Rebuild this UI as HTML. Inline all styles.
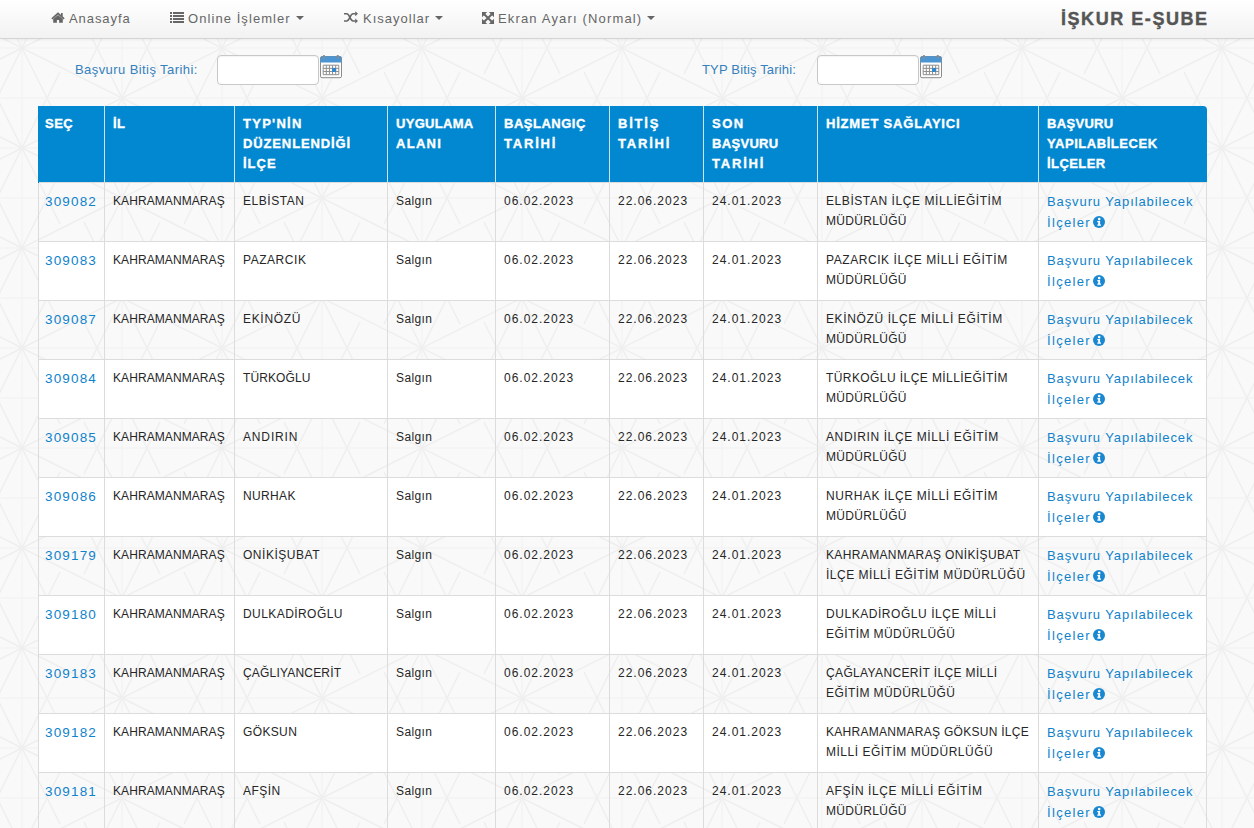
<!DOCTYPE html>
<html><head><meta charset="utf-8">
<style>
html,body{margin:0;padding:0;width:1254px;height:828px;overflow:hidden}
body{background:#f9f9f9;font-family:"Liberation Sans",sans-serif;position:relative}
#bg{position:absolute;left:0;top:0;width:1254px;height:828px}
.nav{position:absolute;left:0;top:0;width:1254px;height:38px;background:linear-gradient(#ffffff,#f2f2f2);border-bottom:1px solid #d4d4d4;box-shadow:0 1px 3px rgba(0,0,0,.06)}
.ni{position:absolute;top:0;height:38px;line-height:38px;font-size:13px;color:#666;white-space:nowrap}
.ni svg{position:absolute}
.caret{position:absolute;top:16px;width:0;height:0;border-left:4px solid transparent;border-right:4px solid transparent;border-top:4px solid #666}
.brand{-webkit-text-stroke:0.4px #555;position:absolute;top:0;left:1061px;height:38px;line-height:38px;font-size:18px;font-weight:bold;color:#555;letter-spacing:1.55px}
.lbl{position:absolute;font-size:13px;color:#3580bd;white-space:nowrap}
.inp{position:absolute;top:55px;width:100px;height:28px;border:1px solid #c8c8c8;border-radius:4px;background:#fff;box-shadow:inset 0 1px 1px rgba(0,0,0,.05)}
.cal{position:absolute;top:55px}
table{position:absolute;left:38px;top:106px;border-collapse:collapse;table-layout:fixed;width:1169px}
th{-webkit-text-stroke:0.35px #fff;background:#0288d1;color:#fff;font-weight:bold;font-size:13px;line-height:20px;text-align:left;vertical-align:top;padding:8px 8px 0 8px;height:68px;border-left:1px solid #cfe3ee}
th:first-child span{position:relative;left:-2px}
th:first-child{border-left:1px solid #0288d1}
th:last-child{border-top-right-radius:4px}
td{white-space:nowrap;font-size:12px;color:#262626;line-height:20px;vertical-align:top;padding:8px 8px 0 8px;height:50px;border:1px solid #dcdcdc}
tr.w td{background:#fff}
td a,.lnk{color:#0f82cc;text-decoration:none;font-size:13px}
.lnk2{line-height:21px}
.sid{letter-spacing:1.15px;font-size:13.5px;position:relative;left:-2px;top:1px}
.il{letter-spacing:0.08px}
.ic{letter-spacing:0.57px}
.sg{letter-spacing:0.4px}
.dt{letter-spacing:1px}
.hz{letter-spacing:0.58px}
.lk a{letter-spacing:0.9px}
.l1{position:relative;top:1px}
.l2{letter-spacing:1.33px;position:relative;top:2px}
.info{position:absolute;margin-left:2px;margin-top:5px}
</style></head><body>
<svg id="bg" width="1254" height="828"><path d="M22 38V828M122 38V828M222 38V828M322 38V828M422 38V828M522 38V828M622 38V828M722 38V828M822 38V828M922 38V828M1022 38V828M1122 38V828M1222 38V828M0 48H1254M0 98H1254M0 148H1254M0 198H1254M0 248H1254M0 298H1254M0 348H1254M0 398H1254M0 448H1254M0 498H1254M0 548H1254M0 598H1254M0 648H1254M0 698H1254M0 748H1254M0 798H1254" stroke="#f1f1f1" stroke-width="1" fill="none"/><path d="M0 -963.0L1254 -336.0M0 -941.0L1254 -1568.0M0 -863.0L1254 -236.0M0 -841.0L1254 -1468.0M0 -763.0L1254 -136.0M0 -741.0L1254 -1368.0M0 -663.0L1254 -36.0M0 -641.0L1254 -1268.0M0 -563.0L1254 64.0M0 -541.0L1254 -1168.0M0 -463.0L1254 164.0M0 -441.0L1254 -1068.0M0 -363.0L1254 264.0M0 -341.0L1254 -968.0M0 -263.0L1254 364.0M0 -241.0L1254 -868.0M0 -163.0L1254 464.0M0 -141.0L1254 -768.0M0 -63.0L1254 564.0M0 -41.0L1254 -668.0M0 37.0L1254 664.0M0 59.0L1254 -568.0M0 137.0L1254 764.0M0 159.0L1254 -468.0M0 237.0L1254 864.0M0 259.0L1254 -368.0M0 337.0L1254 964.0M0 359.0L1254 -268.0M0 437.0L1254 1064.0M0 459.0L1254 -168.0M0 537.0L1254 1164.0M0 559.0L1254 -68.0M0 637.0L1254 1264.0M0 659.0L1254 32.0M0 737.0L1254 1364.0M0 759.0L1254 132.0M0 837.0L1254 1464.0M0 859.0L1254 232.0M0 937.0L1254 1564.0M0 959.0L1254 332.0M0 1037.0L1254 1664.0M0 1059.0L1254 432.0M0 1137.0L1254 1764.0M0 1159.0L1254 532.0M0 1237.0L1254 1864.0M0 1259.0L1254 632.0M0 1337.0L1254 1964.0M0 1359.0L1254 732.0M0 1437.0L1254 2064.0M0 1459.0L1254 832.0M0 1537.0L1254 2164.0M0 1559.0L1254 932.0M0 1637.0L1254 2264.0M0 1659.0L1254 1032.0M0 1737.0L1254 2364.0M0 1759.0L1254 1132.0M0 1837.0L1254 2464.0M0 1859.0L1254 1232.0M0 1937.0L1254 2564.0M0 1959.0L1254 1332.0" stroke="#eeeeee" stroke-width="1.5" fill="none"/><path d="M-216.0 -128.0L-140.0 24.0M-216.0 24.0L-140.0 -128.0M-216.0 -28.0L-140.0 124.0M-216.0 124.0L-140.0 -28.0M-216.0 72.0L-140.0 224.0M-216.0 224.0L-140.0 72.0M-216.0 172.0L-140.0 324.0M-216.0 324.0L-140.0 172.0M-216.0 272.0L-140.0 424.0M-216.0 424.0L-140.0 272.0M-216.0 372.0L-140.0 524.0M-216.0 524.0L-140.0 372.0M-216.0 472.0L-140.0 624.0M-216.0 624.0L-140.0 472.0M-216.0 572.0L-140.0 724.0M-216.0 724.0L-140.0 572.0M-216.0 672.0L-140.0 824.0M-216.0 824.0L-140.0 672.0M-216.0 772.0L-140.0 924.0M-216.0 924.0L-140.0 772.0M-116.0 -78.0L-40.0 74.0M-116.0 74.0L-40.0 -78.0M-116.0 22.0L-40.0 174.0M-116.0 174.0L-40.0 22.0M-116.0 122.0L-40.0 274.0M-116.0 274.0L-40.0 122.0M-116.0 222.0L-40.0 374.0M-116.0 374.0L-40.0 222.0M-116.0 322.0L-40.0 474.0M-116.0 474.0L-40.0 322.0M-116.0 422.0L-40.0 574.0M-116.0 574.0L-40.0 422.0M-116.0 522.0L-40.0 674.0M-116.0 674.0L-40.0 522.0M-116.0 622.0L-40.0 774.0M-116.0 774.0L-40.0 622.0M-116.0 722.0L-40.0 874.0M-116.0 874.0L-40.0 722.0M-116.0 822.0L-40.0 974.0M-116.0 974.0L-40.0 822.0M-16.0 -128.0L60.0 24.0M-16.0 24.0L60.0 -128.0M-16.0 -28.0L60.0 124.0M-16.0 124.0L60.0 -28.0M-16.0 72.0L60.0 224.0M-16.0 224.0L60.0 72.0M-16.0 172.0L60.0 324.0M-16.0 324.0L60.0 172.0M-16.0 272.0L60.0 424.0M-16.0 424.0L60.0 272.0M-16.0 372.0L60.0 524.0M-16.0 524.0L60.0 372.0M-16.0 472.0L60.0 624.0M-16.0 624.0L60.0 472.0M-16.0 572.0L60.0 724.0M-16.0 724.0L60.0 572.0M-16.0 672.0L60.0 824.0M-16.0 824.0L60.0 672.0M-16.0 772.0L60.0 924.0M-16.0 924.0L60.0 772.0M84.0 -78.0L160.0 74.0M84.0 74.0L160.0 -78.0M84.0 22.0L160.0 174.0M84.0 174.0L160.0 22.0M84.0 122.0L160.0 274.0M84.0 274.0L160.0 122.0M84.0 222.0L160.0 374.0M84.0 374.0L160.0 222.0M84.0 322.0L160.0 474.0M84.0 474.0L160.0 322.0M84.0 422.0L160.0 574.0M84.0 574.0L160.0 422.0M84.0 522.0L160.0 674.0M84.0 674.0L160.0 522.0M84.0 622.0L160.0 774.0M84.0 774.0L160.0 622.0M84.0 722.0L160.0 874.0M84.0 874.0L160.0 722.0M84.0 822.0L160.0 974.0M84.0 974.0L160.0 822.0M184.0 -128.0L260.0 24.0M184.0 24.0L260.0 -128.0M184.0 -28.0L260.0 124.0M184.0 124.0L260.0 -28.0M184.0 72.0L260.0 224.0M184.0 224.0L260.0 72.0M184.0 172.0L260.0 324.0M184.0 324.0L260.0 172.0M184.0 272.0L260.0 424.0M184.0 424.0L260.0 272.0M184.0 372.0L260.0 524.0M184.0 524.0L260.0 372.0M184.0 472.0L260.0 624.0M184.0 624.0L260.0 472.0M184.0 572.0L260.0 724.0M184.0 724.0L260.0 572.0M184.0 672.0L260.0 824.0M184.0 824.0L260.0 672.0M184.0 772.0L260.0 924.0M184.0 924.0L260.0 772.0M284.0 -78.0L360.0 74.0M284.0 74.0L360.0 -78.0M284.0 22.0L360.0 174.0M284.0 174.0L360.0 22.0M284.0 122.0L360.0 274.0M284.0 274.0L360.0 122.0M284.0 222.0L360.0 374.0M284.0 374.0L360.0 222.0M284.0 322.0L360.0 474.0M284.0 474.0L360.0 322.0M284.0 422.0L360.0 574.0M284.0 574.0L360.0 422.0M284.0 522.0L360.0 674.0M284.0 674.0L360.0 522.0M284.0 622.0L360.0 774.0M284.0 774.0L360.0 622.0M284.0 722.0L360.0 874.0M284.0 874.0L360.0 722.0M284.0 822.0L360.0 974.0M284.0 974.0L360.0 822.0M384.0 -128.0L460.0 24.0M384.0 24.0L460.0 -128.0M384.0 -28.0L460.0 124.0M384.0 124.0L460.0 -28.0M384.0 72.0L460.0 224.0M384.0 224.0L460.0 72.0M384.0 172.0L460.0 324.0M384.0 324.0L460.0 172.0M384.0 272.0L460.0 424.0M384.0 424.0L460.0 272.0M384.0 372.0L460.0 524.0M384.0 524.0L460.0 372.0M384.0 472.0L460.0 624.0M384.0 624.0L460.0 472.0M384.0 572.0L460.0 724.0M384.0 724.0L460.0 572.0M384.0 672.0L460.0 824.0M384.0 824.0L460.0 672.0M384.0 772.0L460.0 924.0M384.0 924.0L460.0 772.0M484.0 -78.0L560.0 74.0M484.0 74.0L560.0 -78.0M484.0 22.0L560.0 174.0M484.0 174.0L560.0 22.0M484.0 122.0L560.0 274.0M484.0 274.0L560.0 122.0M484.0 222.0L560.0 374.0M484.0 374.0L560.0 222.0M484.0 322.0L560.0 474.0M484.0 474.0L560.0 322.0M484.0 422.0L560.0 574.0M484.0 574.0L560.0 422.0M484.0 522.0L560.0 674.0M484.0 674.0L560.0 522.0M484.0 622.0L560.0 774.0M484.0 774.0L560.0 622.0M484.0 722.0L560.0 874.0M484.0 874.0L560.0 722.0M484.0 822.0L560.0 974.0M484.0 974.0L560.0 822.0M584.0 -128.0L660.0 24.0M584.0 24.0L660.0 -128.0M584.0 -28.0L660.0 124.0M584.0 124.0L660.0 -28.0M584.0 72.0L660.0 224.0M584.0 224.0L660.0 72.0M584.0 172.0L660.0 324.0M584.0 324.0L660.0 172.0M584.0 272.0L660.0 424.0M584.0 424.0L660.0 272.0M584.0 372.0L660.0 524.0M584.0 524.0L660.0 372.0M584.0 472.0L660.0 624.0M584.0 624.0L660.0 472.0M584.0 572.0L660.0 724.0M584.0 724.0L660.0 572.0M584.0 672.0L660.0 824.0M584.0 824.0L660.0 672.0M584.0 772.0L660.0 924.0M584.0 924.0L660.0 772.0M684.0 -78.0L760.0 74.0M684.0 74.0L760.0 -78.0M684.0 22.0L760.0 174.0M684.0 174.0L760.0 22.0M684.0 122.0L760.0 274.0M684.0 274.0L760.0 122.0M684.0 222.0L760.0 374.0M684.0 374.0L760.0 222.0M684.0 322.0L760.0 474.0M684.0 474.0L760.0 322.0M684.0 422.0L760.0 574.0M684.0 574.0L760.0 422.0M684.0 522.0L760.0 674.0M684.0 674.0L760.0 522.0M684.0 622.0L760.0 774.0M684.0 774.0L760.0 622.0M684.0 722.0L760.0 874.0M684.0 874.0L760.0 722.0M684.0 822.0L760.0 974.0M684.0 974.0L760.0 822.0M784.0 -128.0L860.0 24.0M784.0 24.0L860.0 -128.0M784.0 -28.0L860.0 124.0M784.0 124.0L860.0 -28.0M784.0 72.0L860.0 224.0M784.0 224.0L860.0 72.0M784.0 172.0L860.0 324.0M784.0 324.0L860.0 172.0M784.0 272.0L860.0 424.0M784.0 424.0L860.0 272.0M784.0 372.0L860.0 524.0M784.0 524.0L860.0 372.0M784.0 472.0L860.0 624.0M784.0 624.0L860.0 472.0M784.0 572.0L860.0 724.0M784.0 724.0L860.0 572.0M784.0 672.0L860.0 824.0M784.0 824.0L860.0 672.0M784.0 772.0L860.0 924.0M784.0 924.0L860.0 772.0M884.0 -78.0L960.0 74.0M884.0 74.0L960.0 -78.0M884.0 22.0L960.0 174.0M884.0 174.0L960.0 22.0M884.0 122.0L960.0 274.0M884.0 274.0L960.0 122.0M884.0 222.0L960.0 374.0M884.0 374.0L960.0 222.0M884.0 322.0L960.0 474.0M884.0 474.0L960.0 322.0M884.0 422.0L960.0 574.0M884.0 574.0L960.0 422.0M884.0 522.0L960.0 674.0M884.0 674.0L960.0 522.0M884.0 622.0L960.0 774.0M884.0 774.0L960.0 622.0M884.0 722.0L960.0 874.0M884.0 874.0L960.0 722.0M884.0 822.0L960.0 974.0M884.0 974.0L960.0 822.0M984.0 -128.0L1060.0 24.0M984.0 24.0L1060.0 -128.0M984.0 -28.0L1060.0 124.0M984.0 124.0L1060.0 -28.0M984.0 72.0L1060.0 224.0M984.0 224.0L1060.0 72.0M984.0 172.0L1060.0 324.0M984.0 324.0L1060.0 172.0M984.0 272.0L1060.0 424.0M984.0 424.0L1060.0 272.0M984.0 372.0L1060.0 524.0M984.0 524.0L1060.0 372.0M984.0 472.0L1060.0 624.0M984.0 624.0L1060.0 472.0M984.0 572.0L1060.0 724.0M984.0 724.0L1060.0 572.0M984.0 672.0L1060.0 824.0M984.0 824.0L1060.0 672.0M984.0 772.0L1060.0 924.0M984.0 924.0L1060.0 772.0M1084.0 -78.0L1160.0 74.0M1084.0 74.0L1160.0 -78.0M1084.0 22.0L1160.0 174.0M1084.0 174.0L1160.0 22.0M1084.0 122.0L1160.0 274.0M1084.0 274.0L1160.0 122.0M1084.0 222.0L1160.0 374.0M1084.0 374.0L1160.0 222.0M1084.0 322.0L1160.0 474.0M1084.0 474.0L1160.0 322.0M1084.0 422.0L1160.0 574.0M1084.0 574.0L1160.0 422.0M1084.0 522.0L1160.0 674.0M1084.0 674.0L1160.0 522.0M1084.0 622.0L1160.0 774.0M1084.0 774.0L1160.0 622.0M1084.0 722.0L1160.0 874.0M1084.0 874.0L1160.0 722.0M1084.0 822.0L1160.0 974.0M1084.0 974.0L1160.0 822.0M1184.0 -128.0L1260.0 24.0M1184.0 24.0L1260.0 -128.0M1184.0 -28.0L1260.0 124.0M1184.0 124.0L1260.0 -28.0M1184.0 72.0L1260.0 224.0M1184.0 224.0L1260.0 72.0M1184.0 172.0L1260.0 324.0M1184.0 324.0L1260.0 172.0M1184.0 272.0L1260.0 424.0M1184.0 424.0L1260.0 272.0M1184.0 372.0L1260.0 524.0M1184.0 524.0L1260.0 372.0M1184.0 472.0L1260.0 624.0M1184.0 624.0L1260.0 472.0M1184.0 572.0L1260.0 724.0M1184.0 724.0L1260.0 572.0M1184.0 672.0L1260.0 824.0M1184.0 824.0L1260.0 672.0M1184.0 772.0L1260.0 924.0M1184.0 924.0L1260.0 772.0M1284.0 -78.0L1360.0 74.0M1284.0 74.0L1360.0 -78.0M1284.0 22.0L1360.0 174.0M1284.0 174.0L1360.0 22.0M1284.0 122.0L1360.0 274.0M1284.0 274.0L1360.0 122.0M1284.0 222.0L1360.0 374.0M1284.0 374.0L1360.0 222.0M1284.0 322.0L1360.0 474.0M1284.0 474.0L1360.0 322.0M1284.0 422.0L1360.0 574.0M1284.0 574.0L1360.0 422.0M1284.0 522.0L1360.0 674.0M1284.0 674.0L1360.0 522.0M1284.0 622.0L1360.0 774.0M1284.0 774.0L1360.0 622.0M1284.0 722.0L1360.0 874.0M1284.0 874.0L1360.0 722.0M1284.0 822.0L1360.0 974.0M1284.0 974.0L1360.0 822.0M1384.0 -128.0L1460.0 24.0M1384.0 24.0L1460.0 -128.0M1384.0 -28.0L1460.0 124.0M1384.0 124.0L1460.0 -28.0M1384.0 72.0L1460.0 224.0M1384.0 224.0L1460.0 72.0M1384.0 172.0L1460.0 324.0M1384.0 324.0L1460.0 172.0M1384.0 272.0L1460.0 424.0M1384.0 424.0L1460.0 272.0M1384.0 372.0L1460.0 524.0M1384.0 524.0L1460.0 372.0M1384.0 472.0L1460.0 624.0M1384.0 624.0L1460.0 472.0M1384.0 572.0L1460.0 724.0M1384.0 724.0L1460.0 572.0M1384.0 672.0L1460.0 824.0M1384.0 824.0L1460.0 672.0M1384.0 772.0L1460.0 924.0M1384.0 924.0L1460.0 772.0" stroke="#efefef" stroke-width="1.5" fill="none"/></svg>
<div class="nav">
  <div class="ni" style="left:51px">
    <svg width="14" height="12" viewBox="0 0 14 12" style="left:0;top:12px"><path d="M0.9 6.9 L7 1.3 L13.1 6.9" fill="none" stroke="#666" stroke-width="1.7"/><rect x="10" y="1" width="1.7" height="3.6" fill="#666"/><path d="M2.2 10.8 V7.1 L7 2.9 L11.8 7.1 V10.8 H8.1 V8 H5.9 V10.8Z" fill="#666"/></svg>
    <span style="position:absolute;left:18px;letter-spacing:0.93px">Anasayfa</span>
  </div>
  <div class="ni" style="left:170px">
    <svg width="14" height="12" viewBox="0 0 14 12" style="left:0;top:12px"><g fill="#666"><rect x="0" y="0" width="2" height="2"/><rect x="3" y="0" width="11" height="2"/><rect x="0" y="3" width="2" height="2"/><rect x="3" y="3" width="11" height="2"/><rect x="0" y="6" width="2" height="2"/><rect x="3" y="6" width="11" height="2"/><rect x="0" y="9" width="2" height="2"/><rect x="3" y="9" width="11" height="2"/></g></svg>
    <span style="position:absolute;left:18px;letter-spacing:1.07px">Online İşlemler</span>
    <div class="caret" style="left:126px"></div>
  </div>
  <div class="ni" style="left:344px">
    <svg width="14" height="13" viewBox="0 0 14 13" style="left:0;top:11px"><g fill="none" stroke="#666" stroke-width="1.6"><path d="M0 2.8 H2.8 C5.6 2.8 6.2 10 9 10 H11.5"/><path d="M0 10 H2.8 C5.6 10 6.2 2.8 9 2.8 H11.5"/></g><path d="M11.2 0.2 L14 2.8 L11.2 5.3Z M11.2 7.4 L14 10 L11.2 12.6Z" fill="#666"/></svg>
    <span style="position:absolute;left:19px;letter-spacing:1px">Kısayollar</span>
    <div class="caret" style="left:91px"></div>
  </div>
  <div class="ni" style="left:481px">
    <svg width="13" height="13" viewBox="0 0 13 13" style="left:1px;top:12px"><g fill="#666"><path d="M0 0 H5.2 L0 5.2Z"/><path d="M12 0 V5.2 L6.8 0Z"/><path d="M0 12 V6.8 L5.2 12Z"/><path d="M12 12 H6.8 L12 6.8Z"/></g><path d="M1.5 1.5 L10.5 10.5 M10.5 1.5 L1.5 10.5" stroke="#666" stroke-width="2"/></svg>
    <span style="position:absolute;left:17px;letter-spacing:1.16px">Ekran Ayarı (Normal)</span>
    <div class="caret" style="left:166px"></div>
  </div>
  <div class="brand">İŞKUR E-ŞUBE</div>
</div>

<div class="lbl" style="left:75px;top:62px;letter-spacing:0.42px">Başvuru Bitiş Tarihi:</div>
<div class="inp" style="left:217px"></div>
<svg class="cal" style="left:320px" width="22" height="24" viewBox="0 0 22 24"><rect x="0.5" y="1.5" width="21" height="21.2" rx="1.5" fill="#fff" stroke="#8a8a8a"/><path d="M0.5 7.6 V3 Q0.5 1.2 2.3 1.2 H19.7 Q21.5 1.2 21.5 3 V7.6Z" fill="#4a95d2"/><g fill="#8a8a8a"><rect x="3" y="0" width="2" height="3.6" rx="0.6"/><rect x="16.8" y="0" width="2" height="3.6" rx="0.6"/></g><g stroke="#8f8f8f" stroke-width="1"><line x1="3.20" y1="10.2" x2="3.20" y2="19.7"/><line x1="6.32" y1="10.2" x2="6.32" y2="19.7"/><line x1="9.44" y1="10.2" x2="9.44" y2="19.7"/><line x1="12.56" y1="10.2" x2="12.56" y2="19.7"/><line x1="15.68" y1="10.2" x2="15.68" y2="19.7"/><line x1="18.80" y1="10.2" x2="18.80" y2="19.7"/><line x1="3.2" y1="10.20" x2="18.8" y2="10.20"/><line x1="3.2" y1="13.37" x2="18.8" y2="13.37"/><line x1="3.2" y1="16.53" x2="18.8" y2="16.53"/><line x1="3.2" y1="19.70" x2="18.8" y2="19.70"/></g><rect x="12.16" y="12.97" width="3.92" height="3.97" fill="#2f86cf"/></svg>
<div class="lbl" style="left:702px;top:62px;letter-spacing:0.16px">TYP Bitiş Tarihi:</div>
<div class="inp" style="left:817px"></div>
<svg class="cal" style="left:920px" width="22" height="24" viewBox="0 0 22 24"><rect x="0.5" y="1.5" width="21" height="21.2" rx="1.5" fill="#fff" stroke="#8a8a8a"/><path d="M0.5 7.6 V3 Q0.5 1.2 2.3 1.2 H19.7 Q21.5 1.2 21.5 3 V7.6Z" fill="#4a95d2"/><g fill="#8a8a8a"><rect x="3" y="0" width="2" height="3.6" rx="0.6"/><rect x="16.8" y="0" width="2" height="3.6" rx="0.6"/></g><g stroke="#8f8f8f" stroke-width="1"><line x1="3.20" y1="10.2" x2="3.20" y2="19.7"/><line x1="6.32" y1="10.2" x2="6.32" y2="19.7"/><line x1="9.44" y1="10.2" x2="9.44" y2="19.7"/><line x1="12.56" y1="10.2" x2="12.56" y2="19.7"/><line x1="15.68" y1="10.2" x2="15.68" y2="19.7"/><line x1="18.80" y1="10.2" x2="18.80" y2="19.7"/><line x1="3.2" y1="10.20" x2="18.8" y2="10.20"/><line x1="3.2" y1="13.37" x2="18.8" y2="13.37"/><line x1="3.2" y1="16.53" x2="18.8" y2="16.53"/><line x1="3.2" y1="19.70" x2="18.8" y2="19.70"/></g><rect x="12.16" y="12.97" width="3.92" height="3.97" fill="#2f86cf"/></svg>

<table>
<colgroup><col style="width:66px"><col style="width:130px"><col style="width:153px"><col style="width:108px"><col style="width:114px"><col style="width:94px"><col style="width:114px"><col style="width:221px"><col style="width:168px"></colgroup>
<thead><tr><th><span style="letter-spacing:0.5px">SEÇ</span></th><th><span style="letter-spacing:0.5px">İL</span></th><th><span style="letter-spacing:1.27px">TYP'NİN</span><br><span style="letter-spacing:0.87px">DÜZENLENDİĞİ</span><br><span style="letter-spacing:1.0px">İLÇE</span></th><th><span style="letter-spacing:0.3px">UYGULAMA</span><br><span style="letter-spacing:1.3px">ALANI</span></th><th><span style="letter-spacing:0.5px">BAŞLANGIÇ</span><br><span style="letter-spacing:1.8px">TARİHİ</span></th><th><span style="letter-spacing:1.8px">BİTİŞ</span><br><span style="letter-spacing:1.8px">TARİHİ</span></th><th><span style="letter-spacing:1.5px">SON</span><br><span style="letter-spacing:0.32px">BAŞVURU</span><br><span style="letter-spacing:1.8px">TARİHİ</span></th><th><span style="letter-spacing:0.8px">HİZMET SAĞLAYICI</span></th><th><span style="letter-spacing:0.32px">BAŞVURU</span><br><span style="letter-spacing:0.54px">YAPILABİLECEK</span><br><span style="letter-spacing:0.43px">İLÇELER</span></th></tr></thead>
<tbody id="tb">
<tr><td><a class="sid">309082</a></td><td class="il">KAHRAMANMARAŞ</td><td class="ic"><span style="letter-spacing:0.53px">ELBİSTAN</span></td><td class="sg">Salgın</td><td class="dt">06.02.2023</td><td class="dt">22.06.2023</td><td class="dt">24.01.2023</td><td class="hz"><span style="letter-spacing:0.57px">ELBİSTAN İLÇE MİLLİEĞİTİM</span><br><span style="letter-spacing:0.31px">MÜDÜRLÜĞÜ</span></td><td class="lk"><a><span class="l1">Başvuru Yapılabilecek</span><br><span class="l2">İlçeler</span><svg class="info" width="12" height="12" viewBox="0 0 12 12"><circle cx="6" cy="6" r="6" fill="#1a88d0"/><circle cx="6.2" cy="3.1" r="1.3" fill="#fff"/><path d="M4.3 5 H7.1 V8.6 H8 V9.8 H4.3 V8.6 H5.2 V6.2 H4.3Z" fill="#fff"/></svg></a></td></tr>
<tr class="w"><td><a class="sid">309083</a></td><td class="il">KAHRAMANMARAŞ</td><td class="ic"><span style="letter-spacing:0.54px">PAZARCIK</span></td><td class="sg">Salgın</td><td class="dt">06.02.2023</td><td class="dt">22.06.2023</td><td class="dt">24.01.2023</td><td class="hz"><span style="letter-spacing:0.56px">PAZARCIK İLÇE MİLLİ EĞİTİM</span><br><span style="letter-spacing:0.31px">MÜDÜRLÜĞÜ</span></td><td class="lk"><a><span class="l1">Başvuru Yapılabilecek</span><br><span class="l2">İlçeler</span><svg class="info" width="12" height="12" viewBox="0 0 12 12"><circle cx="6" cy="6" r="6" fill="#1a88d0"/><circle cx="6.2" cy="3.1" r="1.3" fill="#fff"/><path d="M4.3 5 H7.1 V8.6 H8 V9.8 H4.3 V8.6 H5.2 V6.2 H4.3Z" fill="#fff"/></svg></a></td></tr>
<tr><td><a class="sid">309087</a></td><td class="il">KAHRAMANMARAŞ</td><td class="ic"><span style="letter-spacing:0.68px">EKİNÖZÜ</span></td><td class="sg">Salgın</td><td class="dt">06.02.2023</td><td class="dt">22.06.2023</td><td class="dt">24.01.2023</td><td class="hz"><span style="letter-spacing:0.62px">EKİNÖZÜ İLÇE MİLLİ EĞİTİM</span><br><span style="letter-spacing:0.31px">MÜDÜRLÜĞÜ</span></td><td class="lk"><a><span class="l1">Başvuru Yapılabilecek</span><br><span class="l2">İlçeler</span><svg class="info" width="12" height="12" viewBox="0 0 12 12"><circle cx="6" cy="6" r="6" fill="#1a88d0"/><circle cx="6.2" cy="3.1" r="1.3" fill="#fff"/><path d="M4.3 5 H7.1 V8.6 H8 V9.8 H4.3 V8.6 H5.2 V6.2 H4.3Z" fill="#fff"/></svg></a></td></tr>
<tr class="w"><td><a class="sid">309084</a></td><td class="il">KAHRAMANMARAŞ</td><td class="ic"><span style="letter-spacing:0.1px">TÜRKOĞLU</span></td><td class="sg">Salgın</td><td class="dt">06.02.2023</td><td class="dt">22.06.2023</td><td class="dt">24.01.2023</td><td class="hz"><span style="letter-spacing:0.42px">TÜRKOĞLU İLÇE MİLLİEĞİTİM</span><br><span style="letter-spacing:0.31px">MÜDÜRLÜĞÜ</span></td><td class="lk"><a><span class="l1">Başvuru Yapılabilecek</span><br><span class="l2">İlçeler</span><svg class="info" width="12" height="12" viewBox="0 0 12 12"><circle cx="6" cy="6" r="6" fill="#1a88d0"/><circle cx="6.2" cy="3.1" r="1.3" fill="#fff"/><path d="M4.3 5 H7.1 V8.6 H8 V9.8 H4.3 V8.6 H5.2 V6.2 H4.3Z" fill="#fff"/></svg></a></td></tr>
<tr><td><a class="sid">309085</a></td><td class="il">KAHRAMANMARAŞ</td><td class="ic"><span style="letter-spacing:0.85px">ANDIRIN</span></td><td class="sg">Salgın</td><td class="dt">06.02.2023</td><td class="dt">22.06.2023</td><td class="dt">24.01.2023</td><td class="hz"><span style="letter-spacing:0.62px">ANDIRIN İLÇE MİLLİ EĞİTİM</span><br><span style="letter-spacing:0.31px">MÜDÜRLÜĞÜ</span></td><td class="lk"><a><span class="l1">Başvuru Yapılabilecek</span><br><span class="l2">İlçeler</span><svg class="info" width="12" height="12" viewBox="0 0 12 12"><circle cx="6" cy="6" r="6" fill="#1a88d0"/><circle cx="6.2" cy="3.1" r="1.3" fill="#fff"/><path d="M4.3 5 H7.1 V8.6 H8 V9.8 H4.3 V8.6 H5.2 V6.2 H4.3Z" fill="#fff"/></svg></a></td></tr>
<tr class="w"><td><a class="sid">309086</a></td><td class="il">KAHRAMANMARAŞ</td><td class="ic"><span style="letter-spacing:0.36px">NURHAK</span></td><td class="sg">Salgın</td><td class="dt">06.02.2023</td><td class="dt">22.06.2023</td><td class="dt">24.01.2023</td><td class="hz"><span style="letter-spacing:0.56px">NURHAK İLÇE MİLLİ EĞİTİM</span><br><span style="letter-spacing:0.31px">MÜDÜRLÜĞÜ</span></td><td class="lk"><a><span class="l1">Başvuru Yapılabilecek</span><br><span class="l2">İlçeler</span><svg class="info" width="12" height="12" viewBox="0 0 12 12"><circle cx="6" cy="6" r="6" fill="#1a88d0"/><circle cx="6.2" cy="3.1" r="1.3" fill="#fff"/><path d="M4.3 5 H7.1 V8.6 H8 V9.8 H4.3 V8.6 H5.2 V6.2 H4.3Z" fill="#fff"/></svg></a></td></tr>
<tr><td><a class="sid">309179</a></td><td class="il">KAHRAMANMARAŞ</td><td class="ic"><span style="letter-spacing:0.52px">ONİKİŞUBAT</span></td><td class="sg">Salgın</td><td class="dt">06.02.2023</td><td class="dt">22.06.2023</td><td class="dt">24.01.2023</td><td class="hz"><span style="letter-spacing:0.36px">KAHRAMANMARAŞ ONİKİŞUBAT</span><br><span style="letter-spacing:0.51px">İLÇE MİLLİ EĞİTİM MÜDÜRLÜĞÜ</span></td><td class="lk"><a><span class="l1">Başvuru Yapılabilecek</span><br><span class="l2">İlçeler</span><svg class="info" width="12" height="12" viewBox="0 0 12 12"><circle cx="6" cy="6" r="6" fill="#1a88d0"/><circle cx="6.2" cy="3.1" r="1.3" fill="#fff"/><path d="M4.3 5 H7.1 V8.6 H8 V9.8 H4.3 V8.6 H5.2 V6.2 H4.3Z" fill="#fff"/></svg></a></td></tr>
<tr class="w"><td><a class="sid">309180</a></td><td class="il">KAHRAMANMARAŞ</td><td class="ic"><span style="letter-spacing:0.43px">DULKADİROĞLU</span></td><td class="sg">Salgın</td><td class="dt">06.02.2023</td><td class="dt">22.06.2023</td><td class="dt">24.01.2023</td><td class="hz"><span style="letter-spacing:0.55px">DULKADİROĞLU İLÇE MİLLİ</span><br><span style="letter-spacing:0.42px">EĞİTİM MÜDÜRLÜĞÜ</span></td><td class="lk"><a><span class="l1">Başvuru Yapılabilecek</span><br><span class="l2">İlçeler</span><svg class="info" width="12" height="12" viewBox="0 0 12 12"><circle cx="6" cy="6" r="6" fill="#1a88d0"/><circle cx="6.2" cy="3.1" r="1.3" fill="#fff"/><path d="M4.3 5 H7.1 V8.6 H8 V9.8 H4.3 V8.6 H5.2 V6.2 H4.3Z" fill="#fff"/></svg></a></td></tr>
<tr><td><a class="sid">309183</a></td><td class="il">KAHRAMANMARAŞ</td><td class="ic"><span style="letter-spacing:0.19px">ÇAĞLIYANCERİT</span></td><td class="sg">Salgın</td><td class="dt">06.02.2023</td><td class="dt">22.06.2023</td><td class="dt">24.01.2023</td><td class="hz"><span style="letter-spacing:0.36px">ÇAĞLAYANCERİT İLÇE MİLLİ</span><br><span style="letter-spacing:0.42px">EĞİTİM MÜDÜRLÜĞÜ</span></td><td class="lk"><a><span class="l1">Başvuru Yapılabilecek</span><br><span class="l2">İlçeler</span><svg class="info" width="12" height="12" viewBox="0 0 12 12"><circle cx="6" cy="6" r="6" fill="#1a88d0"/><circle cx="6.2" cy="3.1" r="1.3" fill="#fff"/><path d="M4.3 5 H7.1 V8.6 H8 V9.8 H4.3 V8.6 H5.2 V6.2 H4.3Z" fill="#fff"/></svg></a></td></tr>
<tr class="w"><td><a class="sid">309182</a></td><td class="il">KAHRAMANMARAŞ</td><td class="ic"><span style="letter-spacing:0.36px">GÖKSUN</span></td><td class="sg">Salgın</td><td class="dt">06.02.2023</td><td class="dt">22.06.2023</td><td class="dt">24.01.2023</td><td class="hz"><span style="letter-spacing:0.28px">KAHRAMANMARAŞ GÖKSUN İLÇE</span><br><span style="letter-spacing:0.51px">MİLLİ EĞİTİM MÜDÜRLÜĞÜ</span></td><td class="lk"><a><span class="l1">Başvuru Yapılabilecek</span><br><span class="l2">İlçeler</span><svg class="info" width="12" height="12" viewBox="0 0 12 12"><circle cx="6" cy="6" r="6" fill="#1a88d0"/><circle cx="6.2" cy="3.1" r="1.3" fill="#fff"/><path d="M4.3 5 H7.1 V8.6 H8 V9.8 H4.3 V8.6 H5.2 V6.2 H4.3Z" fill="#fff"/></svg></a></td></tr>
<tr><td><a class="sid">309181</a></td><td class="il">KAHRAMANMARAŞ</td><td class="ic"><span style="letter-spacing:0.47px">AFŞİN</span></td><td class="sg">Salgın</td><td class="dt">06.02.2023</td><td class="dt">22.06.2023</td><td class="dt">24.01.2023</td><td class="hz"><span style="letter-spacing:0.57px">AFŞİN İLÇE MİLLİ EĞİTİM</span><br><span style="letter-spacing:0.31px">MÜDÜRLÜĞÜ</span></td><td class="lk"><a><span class="l1">Başvuru Yapılabilecek</span><br><span class="l2">İlçeler</span><svg class="info" width="12" height="12" viewBox="0 0 12 12"><circle cx="6" cy="6" r="6" fill="#1a88d0"/><circle cx="6.2" cy="3.1" r="1.3" fill="#fff"/><path d="M4.3 5 H7.1 V8.6 H8 V9.8 H4.3 V8.6 H5.2 V6.2 H4.3Z" fill="#fff"/></svg></a></td></tr>
</tbody>
</table>
</body></html>
